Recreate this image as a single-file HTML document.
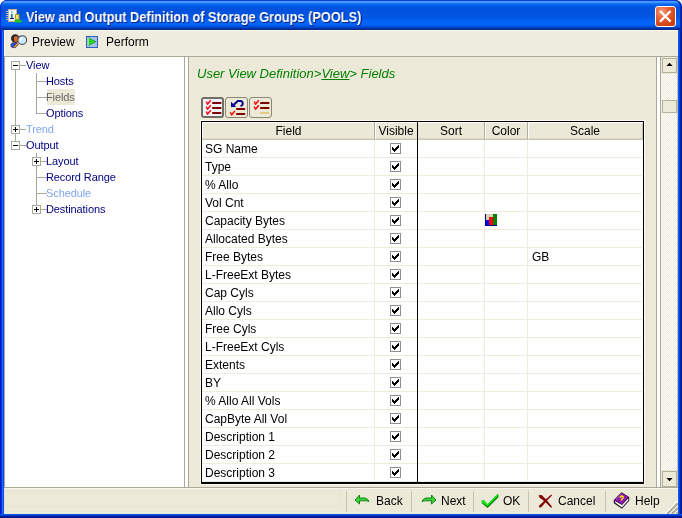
<!DOCTYPE html>
<html><head><meta charset="utf-8"><style>
*{margin:0;padding:0;box-sizing:border-box}
html,body{width:682px;height:518px;overflow:hidden;background:linear-gradient(to right,#fff 50%,#ece9d8 50%);font-family:"Liberation Sans",sans-serif;font-size:12px;color:#000}
div,span,svg{position:absolute}
#win{left:0;top:0;width:682px;height:518px;background:#0831d9;border-radius:7px 7px 0 0;overflow:hidden}
#title{left:0;top:0;width:682px;height:30px;border-radius:7px 7px 0 0;box-shadow:inset 1px 0 #0a2ecf,inset -1px 0 #001a9a,inset -2px 0 #0030c0;
background:linear-gradient(to bottom,#0b3bd8 0 1px,#4a9eff 1px 2px,#3a90ff 2px 3px,#1a76f8 3px 4px,#0a68f2 4px 5px,#005ce9 5px 7px,#0052df 7px 14px,#0055e3 14px 18px,#005cee 18px 20px,#0464f8 20px 25px,#005cf0 25px 26px,#0050dc 26px 27px,#0042c4 27px 28px,#0034a8 28px 29px,#002a90 29px 30px)}
#ttext{left:26px;top:9px;color:#fff;font-weight:bold;font-size:14px;line-height:16px;transform:scaleX(0.912);transform-origin:0 0;text-shadow:1px 1px #0a1e80;white-space:nowrap}
#close{left:655px;top:6px;width:21px;height:21px;border:1px solid #fff;border-radius:3px;background:radial-gradient(circle at 30% 25%,#f29c7e 0,#e56238 35%,#d24416 70%,#c23a10 100%)}
#lb{left:0;top:30px;width:4px;height:488px;background:linear-gradient(to right,#0019cf 0,#0019cf 1px,#0b2ee0 1px,#0b2ee0 2px,#1a6ef2 2px,#1a6ef2 3px,#0a52dd 3px)}
#rb{left:678px;top:30px;width:4px;height:488px;background:linear-gradient(to right,#0a5cf5 0,#0a5cf5 1px,#0045e0 1px,#0045e0 2px,#0024b0 2px,#0024b0 3px,#00138c 3px)}
#bb{left:0;top:514px;width:682px;height:4px;background:linear-gradient(to bottom,#0a56e8 0,#0a56e8 1px,#0036c8 1px,#0036c8 2px,#001ea0 2px,#001ea0 3px,#00138c 3px)}
#client{left:4px;top:30px;width:674px;height:484px;background:#ece9d8}
.t{white-space:nowrap;line-height:14px}
.tree{font-size:11px;color:#000080;white-space:nowrap;line-height:13px;letter-spacing:-0.1px}
.g{background:#aca899}
.hdr{top:123px;height:16px;line-height:16px;text-align:center;font-size:12px}
.cell{font-size:12px;line-height:17px;white-space:nowrap;left:205px;margin-top:1px}
.chk{left:390px;width:11px;height:11px;border:1px solid #8e8f8f;background:#fff}
.sep{top:491px;width:1px;height:21px;background:#c5c2b2}
.t,.tree,.cell,.hdr,#ttext{will-change:transform}
.box{width:9px;height:9px;border:1px solid #aca899;background:#fff}
.box i{position:absolute;left:1px;top:3px;width:5px;height:1px;background:#000}
.box b{position:absolute;left:3px;top:1px;width:1px;height:5px;background:#000}
</style></head><body>
<div id="win"><div id="title"></div><div id="lb"></div><div id="rb"></div><div id="bb"></div><div id="client"></div></div>
<svg style="left:4px;top:6px" width="20" height="20" viewBox="0 0 20 20">
<rect x="4.5" y="3.5" width="8" height="12" fill="#f4f4f4" stroke="#c8b48a"/>
<path d="M2 5.5h3M2 7.5h3M2 9.5h3M2 11.5h3M2 13.5h3" stroke="#b8b8b8" stroke-width="1"/>
<rect x="7" y="5.3" width="1.6" height="1.6" fill="#30d0d8"/>
<rect x="7" y="8" width="1.6" height="4.3" fill="#107c80"/>
<rect x="6" y="12" width="4" height="1" fill="#18186c"/>
<path d="M11.5 8.5 h3.5 v5 h-3.5 z" fill="#f2e468" stroke="#a89a20" stroke-width="1"/>
<ellipse cx="14.1" cy="15" rx="3.9" ry="1.6" fill="#1cc41c"/>
</svg>
<div id="ttext">View and Output Definition of Storage Groups (POOLS)</div>
<div id="close"><svg style="left:3px;top:3px" width="13" height="13" viewBox="0 0 13 13"><path d="M1.8 1.8L10.8 10.8M10.8 1.8L1.8 10.8" stroke="#fff" stroke-width="2.3" stroke-linecap="square"/></svg></div>
<div style="left:4px;top:30px;width:674px;height:26px;background:#eeebdf;border-top:1px solid #fdf8ea;border-bottom:1px solid #f1efe5"></div>
<div style="left:4px;top:30px;width:1px;height:26px;background:#fffbef"></div>
<div class="g" style="left:4px;top:56px;width:674px;height:1px"></div>
<svg style="left:8px;top:32px" width="22" height="20" viewBox="0 0 22 20">
<circle cx="7.2" cy="6.4" r="4.2" fill="#2a2a2a"/>
<path d="M5.8 5 Q8 3.6 10.2 4.8 L10.4 9.5 Q8.5 10.8 6.5 10 Z" fill="#e06a18"/>
<rect x="6.6" y="9.6" width="2.8" height="1.2" fill="#901818"/>
<path d="M3 12 Q4.5 10.2 8 10.6 L9.5 11.5 L7 15.6 L4 15.6 L3 14.5 Z" fill="#2d52e8" stroke="#303040" stroke-width="0.7"/>
<path d="M6.2 15.2 L9.8 11.6" stroke="#303030" stroke-width="2.6"/>
<path d="M6.2 15.2 L9.8 11.6" stroke="#f0a040" stroke-width="1.4"/>
<circle cx="14.2" cy="8.1" r="4.4" fill="#c8ecfb" stroke="#46465a" stroke-width="1.1"/>
<circle cx="13" cy="6.8" r="1.6" fill="#f4fcff"/>
</svg>
<div class="t" style="left:32px;top:35px">Preview</div>
<svg style="left:86px;top:36px" width="12" height="12" viewBox="0 0 12 12">
<rect x="0.5" y="0.5" width="11" height="11" fill="#a8c0ea" stroke="#2a62bc"/>
<path d="M2 1.8 L10 5.6 L2 9.8 Z" fill="#22d822" stroke="#108a10" stroke-width="0.6"/>
<rect x="1.6" y="2" width="1" height="7.6" fill="#e0ffe0"/>
</svg>
<div class="t" style="left:106px;top:35px">Perform</div>
<div class="g" style="left:4px;top:57px;width:1px;height:430px"></div>
<div style="left:5px;top:57px;width:179px;height:430px;background:#fff"></div>
<div class="g" style="left:184px;top:57px;width:1px;height:430px"></div>
<div style="left:185px;top:57px;width:3px;height:430px;background:#fff"></div>
<div class="g" style="left:188px;top:57px;width:1px;height:430px"></div>
<div class="g" style="left:15px;top:70px;width:1px;height:55px"></div>
<div class="g" style="left:15px;top:134px;width:1px;height:7px"></div>
<div class="g" style="left:36px;top:73px;width:1px;height:41px"></div>
<div class="g" style="left:36px;top:153px;width:1px;height:57px"></div>
<div class="g" style="left:20px;top:65px;width:6px;height:1px"></div>
<div class="g" style="left:20px;top:129px;width:6px;height:1px"></div>
<div class="g" style="left:20px;top:145px;width:6px;height:1px"></div>
<div class="g" style="left:37px;top:81px;width:10px;height:1px"></div>
<div class="g" style="left:37px;top:97px;width:10px;height:1px"></div>
<div class="g" style="left:37px;top:113px;width:10px;height:1px"></div>
<div class="g" style="left:37px;top:177px;width:10px;height:1px"></div>
<div class="g" style="left:37px;top:193px;width:10px;height:1px"></div>
<div class="g" style="left:41px;top:161px;width:6px;height:1px"></div>
<div class="g" style="left:41px;top:209px;width:6px;height:1px"></div>
<div class="box" style="left:11px;top:61px"><i></i></div>
<div class="box" style="left:11px;top:125px"><i></i><b></b></div>
<div class="box" style="left:11px;top:141px"><i></i></div>
<div class="box" style="left:32px;top:157px"><i></i><b></b></div>
<div class="box" style="left:32px;top:205px"><i></i><b></b></div>
<div style="left:47px;top:89px;width:28px;height:16px;background:#ece9d8"></div>
<div class="tree" style="left:26px;top:59px;color:#000080">View</div>
<div class="tree" style="left:46px;top:75px;color:#000080">Hosts</div>
<div class="tree" style="left:46px;top:91px;color:#666">Fields</div>
<div class="tree" style="left:46px;top:107px;color:#000080">Options</div>
<div class="tree" style="left:26px;top:123px;color:#7fa6ee">Trend</div>
<div class="tree" style="left:26px;top:139px;color:#000080">Output</div>
<div class="tree" style="left:46px;top:155px;color:#000080">Layout</div>
<div class="tree" style="left:46px;top:171px;color:#000080">Record Range</div>
<div class="tree" style="left:46px;top:187px;color:#7fa6ee">Schedule</div>
<div class="tree" style="left:46px;top:203px;color:#000080">Destinations</div>
<div class="g" style="left:656px;top:57px;width:1px;height:430px"></div>
<div style="left:657px;top:57px;width:3px;height:430px;background:#fff"></div>
<div class="g" style="left:660px;top:57px;width:1px;height:430px"></div>
<div style="left:661px;top:57px;width:16px;height:430px;background:conic-gradient(#ece9d8 25%,#fff 0 50%,#ece9d8 0 75%,#fff 0) 0 0/2px 2px"></div>
<div style="left:677px;top:57px;width:1px;height:430px;background:#c8c4b0"></div>
<div style="left:661px;top:57px;width:16px;height:17px;background:#ece9d8"></div>
<div style="left:661px;top:470px;width:16px;height:17px;background:#ece9d8"></div>
<div style="left:662px;top:58px;width:15px;height:15px;background:#ece9d8;border:1px solid #b4b09e"></div>
<div style="left:662px;top:100px;width:15px;height:13px;background:#ece9d8;border:1px solid #b4b09e"></div>
<div style="left:662px;top:471px;width:15px;height:16px;background:#ece9d8;border:1px solid #b4b09e"></div>
<svg style="left:666px;top:62px" width="7" height="5" viewBox="0 0 7 5"><path d="M3.5 0.8 L6.6 4 L0.4 4 Z" fill="#000"/></svg>
<svg style="left:666px;top:477px" width="7" height="5" viewBox="0 0 7 5"><path d="M0.4 1 L6.6 1 L3.5 4.2 Z" fill="#000"/></svg>
<div class="t" style="left:197px;top:66px;font-size:13px;line-height:15px;font-style:italic;color:#008000">User View Definition&gt;<u>View</u>&gt; Fields</div>
<div style="left:201px;top:97px;width:23px;height:21px;border:2px solid #716f64;border-radius:3px;background:#f0f0f8"></div>
<div style="left:225px;top:97px;width:23px;height:21px;border:1px solid #8a8775;border-radius:3px;background:#ece9d8"></div>
<div style="left:249px;top:97px;width:23px;height:21px;border:1px solid #8a8775;border-radius:3px;background:#ece9d8"></div>
<svg style="left:201px;top:97px" width="72" height="21" viewBox="0 0 72 21">
<g fill="none" stroke="#ff0000" stroke-width="1.4" stroke-linejoin="round">
<path d="M5.3 4.5 L6.5 7.3 L9.8 3.2"/><path d="M5.3 9.5 L6.5 12.3 L9.8 8.2"/><path d="M5.3 14.5 L6.5 17.3 L9.8 13.2"/>
<path d="M29.3 15.2 L30.6 18 L33.8 14"/>
<path d="M53.3 4.5 L54.5 7.3 L57.8 3.2"/><path d="M53.3 9.5 L54.5 12.3 L57.8 8.2"/>
</g>
<g fill="#800000">
<rect x="11" y="5" width="9.5" height="2" rx="0.8"/><rect x="11" y="10" width="9.5" height="2" rx="0.8"/><rect x="11" y="15" width="9.5" height="2" rx="0.8"/>
<rect x="35" y="11" width="9.3" height="2" rx="0.8"/><rect x="35" y="16" width="9.3" height="2" rx="0.8"/>
<rect x="59" y="5" width="9.5" height="2" rx="0.8"/><rect x="59" y="10" width="9.5" height="2" rx="0.8"/>
</g>
<path d="M30 4.8 L30 10 L35.2 10 Z" fill="#000090"/>
<path d="M32.5 8 L36.8 4 L40.2 4 Q41.8 4.8 41.8 6.8 Q41.5 8.8 39.5 9" fill="none" stroke="#000090" stroke-width="2"/>
<path d="M59 15.5 l1 1 l1 -1 l1 1 l1 -1 l1 1 l1 -1 l1 1 l1 -1 l1 1" fill="none" stroke="#e0a010" stroke-width="1"/>
</svg>
<div style="left:200px;top:120px;width:445px;height:365px;background:#fffbf0"></div>
<div style="left:201px;top:121px;width:443px;height:363px;background:#000"></div>
<div style="left:202px;top:122px;width:441px;height:360px;background:#fff"></div>
<div style="left:203px;top:123px;width:439px;height:16px;background:#ebe8d7"></div>
<div style="left:202px;top:139px;width:441px;height:1px;background:#c8c4b2"></div>
<div style="left:202px;top:138px;width:441px;height:1px;background:#dcd8c8"></div>
<div style="left:642px;top:123px;width:1px;height:16px;background:#c8c4b2"></div>
<div style="left:374px;top:122px;width:1px;height:17px;background:#b0ad9c"></div>
<div style="left:375px;top:122px;width:1px;height:17px;background:#fff"></div>
<div style="left:484px;top:122px;width:1px;height:17px;background:#b0ad9c"></div>
<div style="left:485px;top:122px;width:1px;height:17px;background:#fff"></div>
<div style="left:527px;top:122px;width:1px;height:17px;background:#b0ad9c"></div>
<div style="left:528px;top:122px;width:1px;height:17px;background:#fff"></div>
<div class="hdr" style="left:203px;width:171px">Field</div>
<div class="hdr" style="left:375px;width:42px">Visible</div>
<div class="hdr" style="left:418px;width:66px">Sort</div>
<div class="hdr" style="left:485px;width:42px">Color</div>
<div class="hdr" style="left:528px;width:114px">Scale</div>
<div style="left:202px;top:157px;width:440px;height:1px;background:#efebde"></div>
<div style="left:202px;top:175px;width:440px;height:1px;background:#efebde"></div>
<div style="left:202px;top:193px;width:440px;height:1px;background:#efebde"></div>
<div style="left:202px;top:211px;width:440px;height:1px;background:#efebde"></div>
<div style="left:202px;top:229px;width:440px;height:1px;background:#efebde"></div>
<div style="left:202px;top:247px;width:440px;height:1px;background:#efebde"></div>
<div style="left:202px;top:265px;width:440px;height:1px;background:#efebde"></div>
<div style="left:202px;top:283px;width:440px;height:1px;background:#efebde"></div>
<div style="left:202px;top:301px;width:440px;height:1px;background:#efebde"></div>
<div style="left:202px;top:319px;width:440px;height:1px;background:#efebde"></div>
<div style="left:202px;top:337px;width:440px;height:1px;background:#efebde"></div>
<div style="left:202px;top:355px;width:440px;height:1px;background:#efebde"></div>
<div style="left:202px;top:373px;width:440px;height:1px;background:#efebde"></div>
<div style="left:202px;top:391px;width:440px;height:1px;background:#efebde"></div>
<div style="left:202px;top:409px;width:440px;height:1px;background:#efebde"></div>
<div style="left:202px;top:427px;width:440px;height:1px;background:#efebde"></div>
<div style="left:202px;top:445px;width:440px;height:1px;background:#efebde"></div>
<div style="left:202px;top:463px;width:440px;height:1px;background:#efebde"></div>
<div style="left:202px;top:481px;width:440px;height:1px;background:#efebde"></div>
<div style="left:374px;top:140px;width:1px;height:342px;background:#efebde"></div>
<div style="left:484px;top:140px;width:1px;height:342px;background:#efebde"></div>
<div style="left:527px;top:140px;width:1px;height:342px;background:#efebde"></div>
<div style="left:417px;top:122px;width:1px;height:360px;background:#000"></div>
<div class="cell" style="top:140px">SG Name</div>
<div class="chk" style="top:143px"><svg style="left:1px;top:1px" width="7" height="7" viewBox="0 0 7 7" shape-rendering="crispEdges"><path d="M6 0h1v3h-1zM5 1h1v3h-1zM4 2h1v3h-1zM3 3h1v3h-1zM2 4h1v3h-1zM1 3h1v3h-1zM0 2h1v3h-1z" fill="#000"/></svg></div>
<div class="cell" style="top:158px">Type</div>
<div class="chk" style="top:161px"><svg style="left:1px;top:1px" width="7" height="7" viewBox="0 0 7 7" shape-rendering="crispEdges"><path d="M6 0h1v3h-1zM5 1h1v3h-1zM4 2h1v3h-1zM3 3h1v3h-1zM2 4h1v3h-1zM1 3h1v3h-1zM0 2h1v3h-1z" fill="#000"/></svg></div>
<div class="cell" style="top:176px">&#37; Allo</div>
<div class="chk" style="top:179px"><svg style="left:1px;top:1px" width="7" height="7" viewBox="0 0 7 7" shape-rendering="crispEdges"><path d="M6 0h1v3h-1zM5 1h1v3h-1zM4 2h1v3h-1zM3 3h1v3h-1zM2 4h1v3h-1zM1 3h1v3h-1zM0 2h1v3h-1z" fill="#000"/></svg></div>
<div class="cell" style="top:194px">Vol Cnt</div>
<div class="chk" style="top:197px"><svg style="left:1px;top:1px" width="7" height="7" viewBox="0 0 7 7" shape-rendering="crispEdges"><path d="M6 0h1v3h-1zM5 1h1v3h-1zM4 2h1v3h-1zM3 3h1v3h-1zM2 4h1v3h-1zM1 3h1v3h-1zM0 2h1v3h-1z" fill="#000"/></svg></div>
<div class="cell" style="top:212px">Capacity Bytes</div>
<div class="chk" style="top:215px"><svg style="left:1px;top:1px" width="7" height="7" viewBox="0 0 7 7" shape-rendering="crispEdges"><path d="M6 0h1v3h-1zM5 1h1v3h-1zM4 2h1v3h-1zM3 3h1v3h-1zM2 4h1v3h-1zM1 3h1v3h-1zM0 2h1v3h-1z" fill="#000"/></svg></div>
<div class="cell" style="top:230px">Allocated Bytes</div>
<div class="chk" style="top:233px"><svg style="left:1px;top:1px" width="7" height="7" viewBox="0 0 7 7" shape-rendering="crispEdges"><path d="M6 0h1v3h-1zM5 1h1v3h-1zM4 2h1v3h-1zM3 3h1v3h-1zM2 4h1v3h-1zM1 3h1v3h-1zM0 2h1v3h-1z" fill="#000"/></svg></div>
<div class="cell" style="top:248px">Free Bytes</div>
<div class="chk" style="top:251px"><svg style="left:1px;top:1px" width="7" height="7" viewBox="0 0 7 7" shape-rendering="crispEdges"><path d="M6 0h1v3h-1zM5 1h1v3h-1zM4 2h1v3h-1zM3 3h1v3h-1zM2 4h1v3h-1zM1 3h1v3h-1zM0 2h1v3h-1z" fill="#000"/></svg></div>
<div class="cell" style="top:266px">L-FreeExt Bytes</div>
<div class="chk" style="top:269px"><svg style="left:1px;top:1px" width="7" height="7" viewBox="0 0 7 7" shape-rendering="crispEdges"><path d="M6 0h1v3h-1zM5 1h1v3h-1zM4 2h1v3h-1zM3 3h1v3h-1zM2 4h1v3h-1zM1 3h1v3h-1zM0 2h1v3h-1z" fill="#000"/></svg></div>
<div class="cell" style="top:284px">Cap Cyls</div>
<div class="chk" style="top:287px"><svg style="left:1px;top:1px" width="7" height="7" viewBox="0 0 7 7" shape-rendering="crispEdges"><path d="M6 0h1v3h-1zM5 1h1v3h-1zM4 2h1v3h-1zM3 3h1v3h-1zM2 4h1v3h-1zM1 3h1v3h-1zM0 2h1v3h-1z" fill="#000"/></svg></div>
<div class="cell" style="top:302px">Allo Cyls</div>
<div class="chk" style="top:305px"><svg style="left:1px;top:1px" width="7" height="7" viewBox="0 0 7 7" shape-rendering="crispEdges"><path d="M6 0h1v3h-1zM5 1h1v3h-1zM4 2h1v3h-1zM3 3h1v3h-1zM2 4h1v3h-1zM1 3h1v3h-1zM0 2h1v3h-1z" fill="#000"/></svg></div>
<div class="cell" style="top:320px">Free Cyls</div>
<div class="chk" style="top:323px"><svg style="left:1px;top:1px" width="7" height="7" viewBox="0 0 7 7" shape-rendering="crispEdges"><path d="M6 0h1v3h-1zM5 1h1v3h-1zM4 2h1v3h-1zM3 3h1v3h-1zM2 4h1v3h-1zM1 3h1v3h-1zM0 2h1v3h-1z" fill="#000"/></svg></div>
<div class="cell" style="top:338px">L-FreeExt Cyls</div>
<div class="chk" style="top:341px"><svg style="left:1px;top:1px" width="7" height="7" viewBox="0 0 7 7" shape-rendering="crispEdges"><path d="M6 0h1v3h-1zM5 1h1v3h-1zM4 2h1v3h-1zM3 3h1v3h-1zM2 4h1v3h-1zM1 3h1v3h-1zM0 2h1v3h-1z" fill="#000"/></svg></div>
<div class="cell" style="top:356px">Extents</div>
<div class="chk" style="top:359px"><svg style="left:1px;top:1px" width="7" height="7" viewBox="0 0 7 7" shape-rendering="crispEdges"><path d="M6 0h1v3h-1zM5 1h1v3h-1zM4 2h1v3h-1zM3 3h1v3h-1zM2 4h1v3h-1zM1 3h1v3h-1zM0 2h1v3h-1z" fill="#000"/></svg></div>
<div class="cell" style="top:374px">BY</div>
<div class="chk" style="top:377px"><svg style="left:1px;top:1px" width="7" height="7" viewBox="0 0 7 7" shape-rendering="crispEdges"><path d="M6 0h1v3h-1zM5 1h1v3h-1zM4 2h1v3h-1zM3 3h1v3h-1zM2 4h1v3h-1zM1 3h1v3h-1zM0 2h1v3h-1z" fill="#000"/></svg></div>
<div class="cell" style="top:392px">&#37; Allo All Vols</div>
<div class="chk" style="top:395px"><svg style="left:1px;top:1px" width="7" height="7" viewBox="0 0 7 7" shape-rendering="crispEdges"><path d="M6 0h1v3h-1zM5 1h1v3h-1zM4 2h1v3h-1zM3 3h1v3h-1zM2 4h1v3h-1zM1 3h1v3h-1zM0 2h1v3h-1z" fill="#000"/></svg></div>
<div class="cell" style="top:410px">CapByte All Vol</div>
<div class="chk" style="top:413px"><svg style="left:1px;top:1px" width="7" height="7" viewBox="0 0 7 7" shape-rendering="crispEdges"><path d="M6 0h1v3h-1zM5 1h1v3h-1zM4 2h1v3h-1zM3 3h1v3h-1zM2 4h1v3h-1zM1 3h1v3h-1zM0 2h1v3h-1z" fill="#000"/></svg></div>
<div class="cell" style="top:428px">Description 1</div>
<div class="chk" style="top:431px"><svg style="left:1px;top:1px" width="7" height="7" viewBox="0 0 7 7" shape-rendering="crispEdges"><path d="M6 0h1v3h-1zM5 1h1v3h-1zM4 2h1v3h-1zM3 3h1v3h-1zM2 4h1v3h-1zM1 3h1v3h-1zM0 2h1v3h-1z" fill="#000"/></svg></div>
<div class="cell" style="top:446px">Description 2</div>
<div class="chk" style="top:449px"><svg style="left:1px;top:1px" width="7" height="7" viewBox="0 0 7 7" shape-rendering="crispEdges"><path d="M6 0h1v3h-1zM5 1h1v3h-1zM4 2h1v3h-1zM3 3h1v3h-1zM2 4h1v3h-1zM1 3h1v3h-1zM0 2h1v3h-1z" fill="#000"/></svg></div>
<div class="cell" style="top:464px">Description 3</div>
<div class="chk" style="top:467px"><svg style="left:1px;top:1px" width="7" height="7" viewBox="0 0 7 7" shape-rendering="crispEdges"><path d="M6 0h1v3h-1zM5 1h1v3h-1zM4 2h1v3h-1zM3 3h1v3h-1zM2 4h1v3h-1zM1 3h1v3h-1zM0 2h1v3h-1z" fill="#000"/></svg></div>
<div class="cell" style="left:532px;top:248px">GB</div>
<svg style="left:485px;top:214px" width="12" height="12" viewBox="0 0 12 12">
<rect x="1" y="0" width="11" height="11" fill="#d8cfb8"/>
<rect x="1" y="6" width="3" height="5" fill="#0000ff"/>
<rect x="4" y="3" width="4" height="8" fill="#ff0000"/>
<rect x="8" y="0" width="4" height="11" fill="#008000"/>
<rect x="0" y="0" width="1" height="12" fill="#000080"/><rect x="0" y="11" width="12" height="1" fill="#000080"/>
</svg>
<div class="g" style="left:4px;top:487px;width:674px;height:1px"></div>
<div style="left:4px;top:488px;width:674px;height:1px;background:#f8f6ee"></div>
<div style="left:4px;top:491px;width:337px;height:16px;border:1px solid #e6e3d2"></div>
<div class="sep" style="left:346px"></div>
<div class="sep" style="left:411px"></div>
<div class="sep" style="left:473px"></div>
<div class="sep" style="left:528px"></div>
<div class="sep" style="left:605px"></div>
<div class="t" style="left:376px;top:494px">Back</div>
<div class="t" style="left:441px;top:494px">Next</div>
<div class="t" style="left:503px;top:494px">OK</div>
<div class="t" style="left:558px;top:494px">Cancel</div>
<div class="t" style="left:635px;top:494px">Help</div>
<svg style="left:354px;top:494px" width="16" height="11" viewBox="0 0 16 11">
<path d="M1 6 L5.5 1 L5.5 4 L11 4 Q14 4.5 15 7.5 Q12.5 6.5 10 6.8 L5.5 6.8 L5.5 10 Z" fill="#3cd23c" stroke="#0a7a0a" stroke-width="0.9"/>
</svg>
<svg style="left:421px;top:494px" width="16" height="11" viewBox="0 0 16 11">
<path d="M15 6 L10.5 1 L10.5 4 L5 4 Q2 4.5 1 7.5 Q3.5 6.5 6 6.8 L10.5 6.8 L10.5 10 Z" fill="#3cd23c" stroke="#0a7a0a" stroke-width="0.9"/>
</svg>
<svg style="left:478px;top:490px" width="24" height="22" viewBox="0 0 24 22">
<path d="M3.8 10.6 L6.2 10.6 L9.6 14.2 L19.6 4 L20.4 4.6 L20.4 7.2 L9.6 18 L3.8 13.2 Z" fill="#007800"/>
<path d="M3.8 10.6 L6.2 10.6 L9.6 14.2 L19.6 4 L20.2 5.4 L9.6 16.2 L3.8 12.4 Z" fill="#10f010"/>
</svg>
<svg style="left:534px;top:490px" width="22" height="22" viewBox="0 0 22 22">
<path d="M4.6 5.2 L7.6 5 L12.2 9.6 L17.9 16.6 L17.3 17.9 L11 11.8 L5.4 7.6 Z" fill="#800000"/>
<path d="M17.2 4.6 L18 5.4 L12.4 11.2 L7.6 17 L5.6 17.8 L4.8 15.9 L10.6 10.6 Z" fill="#800000"/>
</svg>
<svg style="left:608px;top:488px" width="28" height="26" viewBox="0 0 28 26">
<path d="M5.8 12 L13.5 4.3 L21.2 9 L21.2 12.8 L14 20.8 L5.8 15.2 Z" fill="#181818"/>
<path d="M7 13 L14 17 L20.3 10.3 L20.3 12.4 L14 19.4 L7 14.6 Z" fill="#f2f2f2"/>
<path d="M14 19.4 L20.3 12.4 L20.3 13 L14 20 Z" fill="#8a10a0"/>
<path d="M6.6 12 L13.5 5.1 L20.4 9.1 L13.8 16.2 Z" fill="#9414b4"/>
<path d="M6.6 12 L7.4 12.6 L7.4 14.6 L6.6 14.2 Z" fill="#9414b4"/>
<path d="M8 10.8 L13 5.8" stroke="#d8b8e8" stroke-width="0.8" stroke-dasharray="0.8 1"/>
<path d="M11.8 9.6 Q12.6 7.8 14.4 8.2 Q15.8 8.8 14.8 10.3 L13.6 11.3 L13.6 12.4" fill="none" stroke="#f2e010" stroke-width="1.5"/>
</svg>
<svg style="left:664px;top:500px" width="14" height="14" viewBox="0 0 14 14">
<path d="M14 1 L1 14" stroke="#fff" stroke-width="1.2"/>
<path d="M14 3.2 L3.2 14" stroke="#b0ac9a" stroke-width="2.2"/>
<path d="M14 5.6 L5.6 14" stroke="#fff" stroke-width="1"/>
<path d="M14 7.8 L7.8 14" stroke="#b0ac9a" stroke-width="2.2"/>
<path d="M14 10.2 L10.2 14" stroke="#fff" stroke-width="1"/>
<path d="M14 12.4 L12.4 14" stroke="#b0ac9a" stroke-width="2.2"/>
</svg>
</body></html>
